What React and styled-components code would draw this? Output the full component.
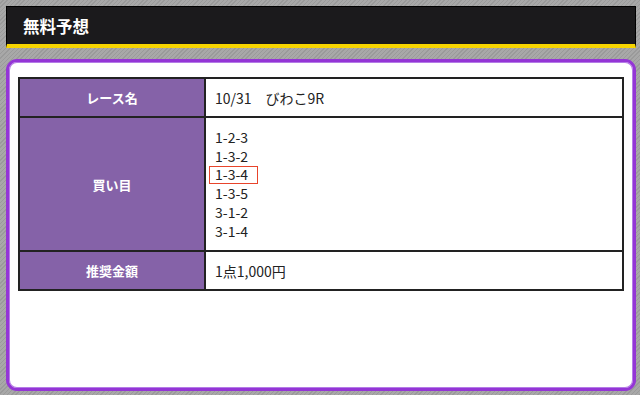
import React from "react";
import styled, { createGlobalStyle } from "styled-components";

const Global = createGlobalStyle`
  html, body { margin: 0; padding: 0; }
  body {
    width: 640px;
    height: 395px;
    overflow: hidden;
    background-color: #a2a2a2;
    background-image: repeating-linear-gradient(
      -45deg,
      #9a9a9a 0px,
      #9a9a9a 1px,
      #a8a8a8 1px,
      #a8a8a8 3px
    );
    font-family: "Noto Sans CJK JP", "Noto Sans", sans-serif;
  }
`;

const Page = styled.div`
  padding: 6px 4px 0 6px;
  display: flex;
  flex-direction: column;
  gap: 11px;
`;

const Header = styled.div`
  height: 37px;
  background: #1b1a1c;
  border: 1px solid #000;
  border-bottom: 4px solid #f7d400;
  display: flex;
  align-items: center;
  padding-left: 16px;
  color: #fff;
  font-weight: 700;
  font-size: 16.5px;
`;

const Card = styled.div`
  box-sizing: border-box;
  height: 332px;
  background: #fff;
  border: 3px solid #9435d6;
  border-radius: 11px;
  box-shadow: inset 0 0 0 1px #b47be6;
  padding: 15px 9px 0 9px;
`;

const Table = styled.table`
  width: 100%;
  border-collapse: collapse;
  border: 2px solid #222;
`;

const Row = styled.tr`
  height: ${(p) => p.$h}px;
`;

const Label = styled.th`
  width: 184px;
  background: #8562a8;
  color: #fff;
  font-weight: 700;
  font-size: 13px;
  border: 2px solid #222;
  text-align: center;
  vertical-align: middle;
  padding: 0;
`;

const Value = styled.td`
  border: 2px solid #222;
  color: #222;
  font-size: 14px;
  padding: 0 0 0 9px;
  vertical-align: middle;
`;

const Lines = styled.div`
  display: flex;
  flex-direction: column;
  align-items: flex-start;
`;

const Line = styled.span`
  line-height: 19px;
  height: 19px;
  display: inline-flex;
  align-items: center;
  box-sizing: border-box;
  ${(p) =>
    p.$marked
      ? `border: 1px solid #e8442b; height: 18px; margin-left: -6px; padding: 0 9px 0 5px;`
      : ``}
`;

const bets = ["1-2-3", "1-3-2", "1-3-4", "1-3-5", "3-1-2", "3-1-4"];

export default function App() {
  return (
    <>
      <Global />
      <Page>
        <Header>無料予想</Header>
        <Card>
          <Table>
            <tbody>
              <Row $h={39}>
                <Label>レース名</Label>
                <Value>10/31　びわこ9R</Value>
              </Row>
              <Row $h={134}>
                <Label>買い目</Label>
                <Value>
                  <Lines>
                    {bets.map((b) => (
                      <Line key={b} $marked={b === "1-3-4"}>
                        {b}
                      </Line>
                    ))}
                  </Lines>
                </Value>
              </Row>
              <Row $h={39}>
                <Label>推奨金額</Label>
                <Value>1点1,000円</Value>
              </Row>
            </tbody>
          </Table>
        </Card>
      </Page>
    </>
  );
}
